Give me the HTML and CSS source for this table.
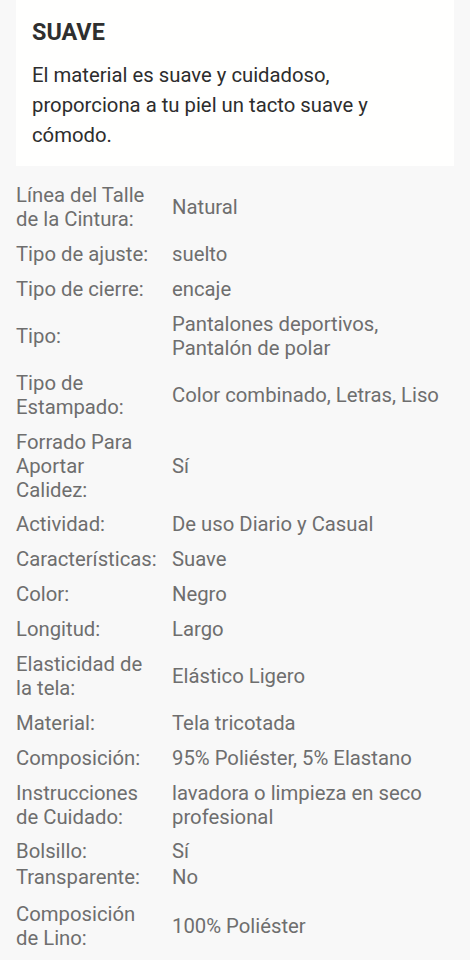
FILE: index.html
```html
<!DOCTYPE html>
<html lang="es">
<head>
<meta charset="utf-8">
<link rel="stylesheet" href="styles.css">
</head>
<body>
<div class="page">
  <section class="card">
    <h2 class="card-title">SUAVE</h2>
    <p class="card-text">El material es suave y cuidadoso, proporciona a tu piel un tacto suave y cómodo.</p>
  </section>
  <div class="specs">
    <div class="row"><div class="k">Línea del Talle de la Cintura:</div><div class="v">Natural</div></div>
    <div class="row"><div class="k">Tipo de ajuste:</div><div class="v">suelto</div></div>
    <div class="row"><div class="k">Tipo de cierre:</div><div class="v">encaje</div></div>
    <div class="row"><div class="k">Tipo:</div><div class="v">Pantalones deportivos, Pantalón de polar</div></div>
    <div class="row"><div class="k">Tipo de Estampado:</div><div class="v">Color combinado, Letras, Liso</div></div>
    <div class="row"><div class="k">Forrado Para Aportar Calidez:</div><div class="v">Sí</div></div>
    <div class="row"><div class="k">Actividad:</div><div class="v">De uso Diario y Casual</div></div>
    <div class="row"><div class="k">Características:</div><div class="v">Suave</div></div>
    <div class="row"><div class="k">Color:</div><div class="v">Negro</div></div>
    <div class="row"><div class="k">Longitud:</div><div class="v">Largo</div></div>
    <div class="row"><div class="k">Elasticidad de la tela:</div><div class="v">Elástico Ligero</div></div>
    <div class="row"><div class="k">Material:</div><div class="v">Tela tricotada</div></div>
    <div class="row"><div class="k">Composición:</div><div class="v">95% Poliéster, 5% Elastano</div></div>
    <div class="row"><div class="k">Instrucciones de Cuidado:</div><div class="v">lavadora o limpieza en seco profesional</div></div>
    <div class="row tight-a"><div class="k">Bolsillo:</div><div class="v">Sí</div></div>
    <div class="row tight-b"><div class="k">Transparente:</div><div class="v">No</div></div>
    <div class="row"><div class="k">Composición de Lino:</div><div class="v">100% Poliéster</div></div>
  </div>
</div>
</body>
</html>
```
FILE: styles.css
```css
html, body {
  margin: 0;
  padding: 0;
  background: #f8f8f8;
  font-family: Roboto, "Noto Sans", sans-serif;
}
.page {
  padding: 0 16px;
}
.card {
  background: #fffffe;
  padding: 17.5px 16px 16px;
}
.card-title {
  margin: 0;
  font-size: 23.4px;
  font-weight: 700;
  line-height: 28px;
  color: #2f2f2f;
}
.card-text {
  margin: 14.5px 0 0;
  font-size: 20.3px;
  line-height: 30px;
  color: #2d2d2d;
}
.specs {
  margin-top: 11.8px;
  font-size: 20.3px;
  line-height: 24px;
  color: #6e6e6e;
}
.row {
  display: grid;
  grid-template-columns: 142px 1fr;
  column-gap: 14px;
  align-items: center;
  padding: 5.45px 0;
}
.row.tight-a {
  padding-bottom: 0;
}
.row.tight-b {
  padding-top: 2px;
  padding-bottom: 6.6px;
}
```
